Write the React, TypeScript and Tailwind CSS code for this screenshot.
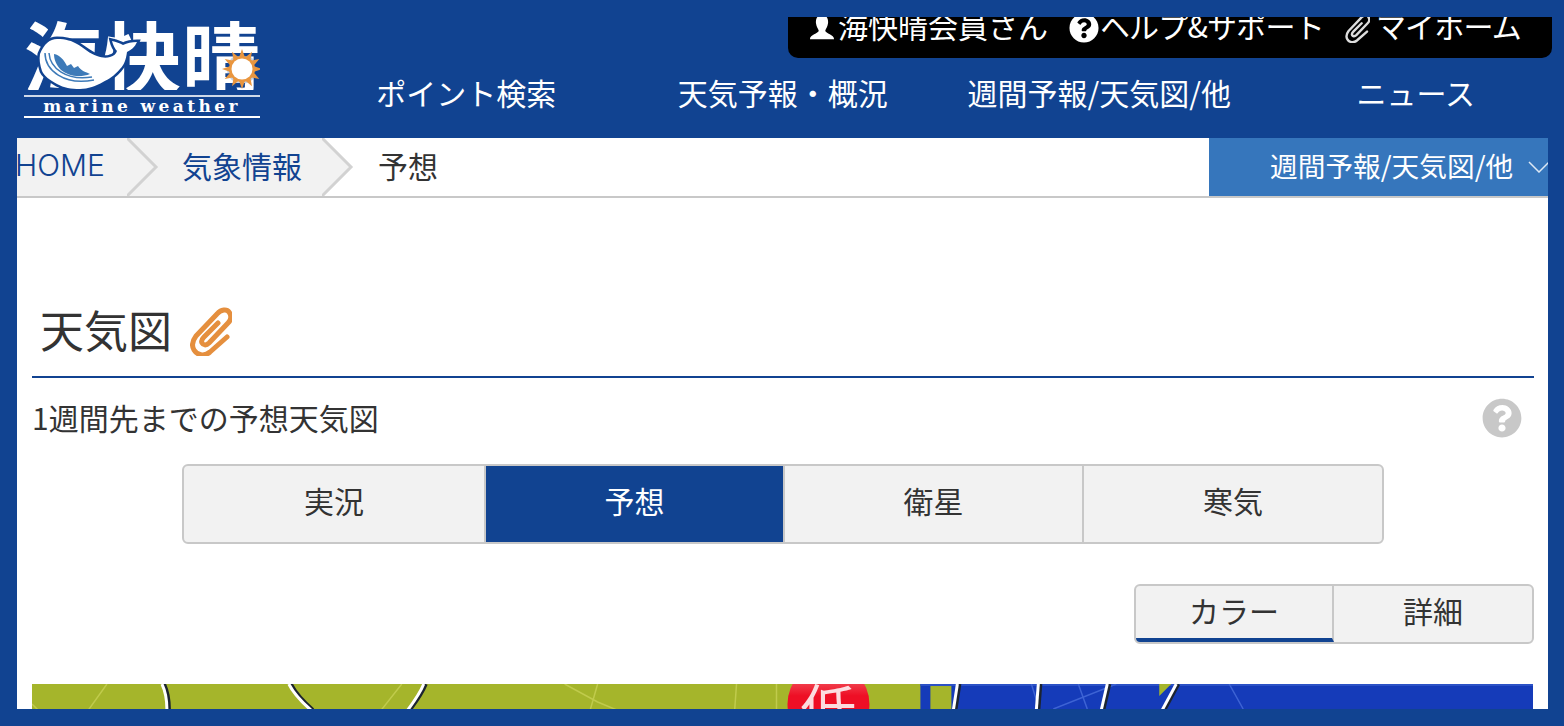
import { FaQuestionCircle } from 'react-icons/fa'

const jp = { fontFamily: '"Noto Sans CJK JP", "Noto Sans", sans-serif' }

const sunRays = Array.from({ length: 12 }, (_, i) => i * 30)

function Clip({ className, color, width = 4 }: { className: string; color: string; width?: number }) {
  return (
    <svg viewBox="0 0 42 50" className={className} fill="none" stroke={color} strokeWidth={width} strokeLinecap="round" strokeLinejoin="round">
      <path d="M37 31 L20 46 C14 51 7 49 4 44 C1 39 3 34 6 30 L27 8 C31 3 37 3 39 6 C42 10 41 14 38 17 L19 37 C16 40 13 39 12 37 C11 35 12 33 14 31 L28 17" />
    </svg>
  )
}

function Logo() {
  return (
    <div className="relative w-[236px] h-[100px] overflow-hidden text-white">
      <div className="flex h-[72px] overflow-hidden text-[78px] leading-[72px] font-bold tracking-[1px] whitespace-nowrap">海快晴</div>
      {/* whale + sun */}
      <svg viewBox="0 0 236 72" className="absolute left-0 top-0 w-[236px] h-[72px]">
        <path d="M16 36 C20 26 26 21 33 21 C42 21 48 23 53 26 C60 30 66 36 73 38 C78 40 83 40 86 39 C90 38 92 36 93 33 C91 31 89 27 88 23 C92 24 96 25 99 27 C103 25 108 24 113 24 C111 29 107 32 103 34 C102 42 100 47 96 51 C90 58 85 61 79 64 C72 68 64 71 56 71 C47 71 40 70 33 66 C26 62 20 58 18 53 C16 47 15 41 16 36 Z" fill="#fff" stroke="#114391" strokeWidth="5" paintOrder="stroke" />
        <path d="M30 36 C36 37 40 42 43 48 L47 46 L50 50 L54 48 C57 53 62 54 66 56 C56 60 44 58 37 52 C32 47 30 41 30 36 Z" fill="#3d7ab8" />
        <g fill="none" stroke="#3d7ab8" strokeWidth="1.5">
          <path d="M21 35 C21 52 40 68 70 62" />
          <path d="M25 35 C26 50 42 63 68 59" />
        </g>
        <circle cx="218" cy="51" r="15" fill="#114391" opacity="0.25" />
        <g fill="#e9963f">
          {sunRays.map((a) => (
            <path key={a} d="M214.5 41 L218 31 L221.5 41 Z" transform={`rotate(${a} 218 51)`} />
          ))}
        </g>
        <circle cx="218" cy="51" r="13" fill="#e9963f" />
        <circle cx="218" cy="51" r="10.5" fill="#fff" />
      </svg>
      <div className="absolute left-0 right-0 top-[77px] h-[2px] bg-white opacity-80" />
      <div className="absolute left-0 right-0 top-[78px] h-[20px] flex items-center justify-center text-[17px] leading-[20px] font-bold tracking-[3.4px] whitespace-nowrap" style={{ fontFamily: '"DejaVu Serif", serif' }}>
        marine weather
      </div>
      <div className="absolute left-0 right-0 bottom-0 h-[2px] bg-white" />
    </div>
  )
}

function Crumb({ label, width, fill, latin }: { label: string; width: string; fill: string; latin?: boolean }) {
  return (
    <div className={`relative h-[58px] flex items-center pb-[5px] ${width}`}>
      <span className="text-[#114391]" style={latin ? { fontFamily: 'Inter, sans-serif', fontWeight: 300 } : undefined}>
        {label}
      </span>
      <svg viewBox="0 0 32 58" className="absolute left-full top-0 w-[32px] h-[58px]">
        <path d="M0 0 L29 29 L0 58 Z" fill={fill} />
        <path d="M0 0 L29 29 L0 58" fill="none" stroke="#d2d2d2" strokeWidth="3" />
      </svg>
    </div>
  )
}

function WeatherMap() {
  return (
    <div className="h-[25px] mt-[40px] mx-[15px] overflow-hidden">
      <svg viewBox="0 0 1502 25" className="block w-full h-[25px]">
        <rect x="0" y="0" width="1502" height="25" fill="#a5b52b" />
        <path d="M0 20 L8 28 M75 0 L55 28 M370 0 L348 28 M533 0 L566 18 L590 28 M566 0 L558 28 M705 0 L703 28 M745 0 V28" stroke="#c0cb4c" strokeWidth="1.5" fill="none" />
        <rect x="889" y="0" width="613" height="25" fill="#153bb9" />
        <rect x="899" y="2" width="21" height="23" fill="#a5b52b" />
        <rect x="889" y="0" width="613" height="2" fill="#2c52c6" />
        <path d="M1000 0 L1008 25 M1022 25 L1085 0 M1198 0 L1212 25 M1047 0 L1056 25" stroke="#3d63d4" strokeWidth="1.5" fill="none" />
        <path d="M1140 0 L1128 12 V0 Z" fill="#a5b52b" />
        {[
          'M130 0 C134 8 135 16 135 26',
          'M257 0 C262 10 270 18 279 26',
          'M392 0 C388 10 382 18 376 26',
          'M926 0 L922 26',
          'M1007 0 L1005 26',
          'M1076 0 L1070 26',
          'M1145 0 L1131 26',
        ].map((d) => (
          <g key={d} fill="none">
            <path d={d} stroke="#1c2430" strokeWidth="4" transform="translate(2 0)" />
            <path d={d} stroke="#fff" strokeWidth="3" />
          </g>
        ))}
        <defs>
          <linearGradient id="low" x1="0" y1="0" x2="0" y2="1">
            <stop offset="0" stopColor="#f58a8a" />
            <stop offset="0.4" stopColor="#ee0f25" />
          </linearGradient>
        </defs>
        <circle cx="797" cy="20" r="41" fill="url(#low)" />
        <text x="797" y="47" textAnchor="middle" fontSize="56" fill="#fff" opacity="0.85" style={jp}>
          低
        </text>
      </svg>
    </div>
  )
}

export default function App() {
  return (
    <div className="h-[726px] w-[1564px] overflow-hidden bg-[#114391] text-[30px] leading-[40px] text-[#333]" style={jp}>
      <header className="h-[138px] flex text-white">
        <div className="w-[308px] shrink-0 pl-[24px] pt-[18px]">
          <Logo />
        </div>
        <div className="flex-1 relative">
          <div className="ml-[480px] mr-[22px] mt-[17px] h-[41px] bg-black rounded-b-[10px] overflow-hidden flex justify-end gap-[21px] pr-[31px] whitespace-nowrap">
            <div className="flex items-center -mt-[12px] h-[40px]">
              <svg viewBox="0 0 28 28" className="w-[26px] h-[26px] mr-[3px] translate-y-[3px]" fill="#fff">
                <path d="M14 0 C19 0 21 4 20.5 9 C20 13 18 15 17.5 17 C18 20 27 21 27 26 H1 C1 21 10 20 10.5 17 C10 15 8 13 7.5 9 C7 4 9 0 14 0 Z" />
              </svg>
              海快晴会員さん
            </div>
            <div className="flex items-center -mt-[12px] h-[40px] tracking-[-0.8px]">
              <FaQuestionCircle className="w-[30px] h-[30px] mr-[1px] translate-y-[3px]" />
              ヘルプ&サポート
            </div>
            <div className="flex items-center -mt-[12px] h-[40px] tracking-[-0.8px]">
              <Clip className="w-[25px] h-[30px] mr-[6px] translate-y-[3px]" color="#ddd" width={4} />
              マイホーム
            </div>
          </div>
          <nav className="grid grid-cols-[316.5px_316.5px_316.5px_316.5px] mt-[14px] text-center whitespace-nowrap">
            <a>ポイント検索</a>
            <a>天気予報・概況</a>
            <a>週間予報/天気図/他</a>
            <a>ニュース</a>
          </nav>
        </div>
      </header>

      <main className="mx-[17px] w-[1531px] h-[571px] bg-white overflow-hidden">
        <div className="h-[60px] flex border-b-2 border-[#c8c8c8]">
          <div className="flex flex-1 bg-white overflow-hidden">
            <div className="flex bg-[#f2f2f2] w-[306px] h-[58px]">
              <Crumb label="HOME" width="w-[112px] -ml-[2px]" fill="#f2f2f2" latin />
              <Crumb label="気象情報" width="w-[195px] pl-[55px]" fill="#f2f2f2" />
            </div>
            <div className="h-[58px] flex items-center pb-[5px] pl-[55px]">予想</div>
          </div>
          <div className="w-[339px] h-[58px] bg-[#3676bc] text-white text-[27.7px] flex items-center pb-[5px] pl-[61px] overflow-hidden whitespace-nowrap">
            週間予報/天気図/他
            <svg viewBox="0 0 22 12" className="w-[22px] h-[12px] ml-[15px] mt-[5px] shrink-0" fill="none" stroke="#dce8f5" strokeWidth="1.5">
              <path d="M1 1 L11 11 L21 1" />
            </svg>
          </div>
        </div>

        <div className="mx-[15px] mr-[14px] mt-[100px] h-[80px] border-b-2 border-[#114391] pl-[8px] pt-[5px] flex items-start">
          <h1 className="text-[44px] leading-[52px] font-normal">天気図</h1>
          <Clip className="w-[42px] h-[50px] ml-[18px] mt-[3px]" color="#e58f3e" width={5} />
        </div>

        <div className="mx-[15px] mr-[26px] mt-[18px] h-[44px] flex items-center justify-between">
          <p className="-mt-[2px]">1週間先までの予想天気図</p>
          <FaQuestionCircle className="w-[40px] h-[40px] text-[#c8c8c8]" />
        </div>

        <div className="ml-[165px] mt-[24px] w-[1202px] h-[80px] flex border-2 border-[#c8c8c8] rounded-[6px] overflow-hidden bg-[#f2f2f2] text-center">
          <div className="w-[302px] leading-[68px] border-r-2 border-[#c8c8c8]">実況</div>
          <div className="w-[299px] leading-[68px] border-r-2 border-[#c8c8c8] bg-[#114391] text-white">予想</div>
          <div className="w-[299px] leading-[68px] border-r-2 border-[#c8c8c8]">衛星</div>
          <div className="flex-1 leading-[68px]">寒気</div>
        </div>

        <div className="flex justify-end mr-[14px] mt-[40px]">
          <div className="w-[400px] h-[60px] flex border-2 border-[#c8c8c8] rounded-[6px] overflow-hidden bg-[#f2f2f2] text-center">
            <div className="w-[198px] h-[56px] border-r-2 border-[#c8c8c8] border-b-4 border-b-[#114391] leading-[48px]">カラー</div>
            <div className="flex-1 leading-[48px]">詳細</div>
          </div>
        </div>

        <WeatherMap />
      </main>
    </div>
  )
}
